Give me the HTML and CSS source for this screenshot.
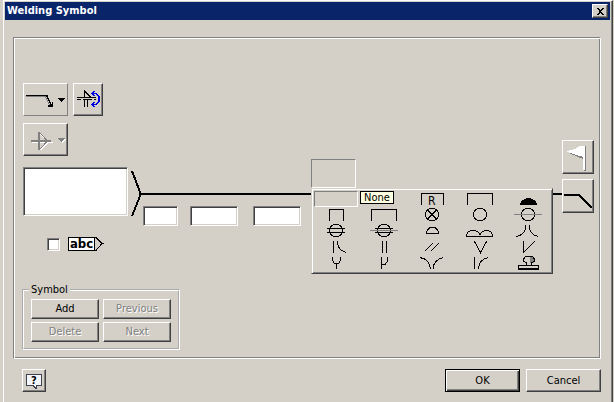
FILE: index.html
```html
<!DOCTYPE html>
<html lang="en">
<head>
<meta charset="utf-8">
<title>Welding Symbol</title>
<link rel="stylesheet" href="styles.css">
</head>
<body>
<div class="dialog" role="dialog" aria-labelledby="title">
  <header class="titlebar">
    <h1 id="title">Welding Symbol</h1>
    <button class="btn close" aria-label="Close"><svg width="8" height="7" viewBox="0 0 8 7"><path d="M0 0h2l2 2 2-2h2L5 3v1l3 3H6L4 5 2 7H0l3-3V3z"/></svg></button>
  </header>

  <main class="panel">
    <div class="workspace">
      <div class="tools">
        <button class="btn wide flat" aria-label="Arrow side"><svg width="43" height="31" viewBox="0 0 43 31"><path class="shade" d="M2 12.500h19l5 9"/><path class="line" d="M2 11.500h21l4 9M22.500 11.500l4 8"/><path d="M29 18v5h-5v-2h2v-1h2v-2z"/><path d="M34 14h7v1h-1v1h-1v1h-1v1h-1v-1h-1v-1h-1v-1h-1z"/></svg></button>
        <button class="btn square" aria-label="Swap symbols"><svg width="26" height="29" viewBox="0 0 26 29"><path class="line" d="M2 12.500h19M2 14.500h4M8 14.500h9M19 14.500h2M9.500 12V6l6 6M9.500 15v7M12.500 15v7"/><path class="blue" d="M16 8.500h5l3 3v5l-3 3h-5M19.500 6l-3 2.500 3 2.500M18.500 7v3M19.500 17l-3 2.500 3 2.500M18.500 18v3M23.500 11v6"/></svg></button>
      </div>
      <div class="tools">
        <button class="btn wide" disabled aria-label="Weld type"><svg width="41" height="29" viewBox="0 0 41 29"><path class="light" d="M7 17.500h21M15.500 9l8 8-8 8"/><path class="shade two" d="M6 16h20M14 7v18"/><path class="shade" d="M14.500 7.500l8 8.500-8 8.500"/><path fill="#fff" d="M34 14h7l-4 4z"/><path fill="#808080" d="M33 13h7v1h-1v1h-1v1h-1v1h-1v-1h-1v-1h-1v-1h-1z"/></svg></button>
      </div>

      <div class="diagram">
        <textarea class="sunken note" aria-label="Tail note"></textarea>
        <svg class="fork" width="10" height="49" viewBox="0 0 10 49"><path class="heavy" d="M1 4l8 21v4L1 49"/></svg>
        <div class="reference">
          <div class="rule"></div>
          <div class="values">
            <input class="sunken short" type="text" aria-label="Prefix">
            <input class="sunken long" type="text" aria-label="Size">
            <input class="sunken long" type="text" aria-label="Length">
          </div>
          <div class="picker">
            <div class="slot"></div>
            <div class="palette">
              <button class="cell selected" aria-label="None"></button>
              <span class="blank"></span>
              <button class="cell" aria-label="Backing removed"><svg viewBox="0 0 48 16"><path d="M13.500 14V2.500h22V14"/><text x="20" y="14">R</text></svg></button>
              <button class="cell" aria-label="Backing"><svg viewBox="0 0 48 16"><path d="M11.500 14V2.500h25V14"/></svg></button>
              <button class="cell" aria-label="Back weld"><svg viewBox="0 0 48 16"><path class="solid" d="M16 14v-2h1v-2h1V9h2V8h2V7h5v1h2v1h2v1h1v2h1v2z"/></svg></button>

              <button class="cell" aria-label="Plug"><svg viewBox="0 0 48 16"><path d="M17.500 14V2.500h14V14"/></svg></button>
              <button class="cell" aria-label="Slot"><svg viewBox="0 0 48 16"><path d="M11.500 14V2.500h25V14"/></svg></button>
              <button class="cell" aria-label="Stud"><svg viewBox="0 0 48 16"><circle cx="24" cy="7.500" r="6.500"/><path d="M20 3.500l8 8M28 3.500l-8 8"/></svg></button>
              <button class="cell" aria-label="Spot"><svg viewBox="0 0 48 16"><circle cx="24" cy="7.500" r="6.500"/></svg></button>
              <button class="cell" aria-label="Spot centered"><svg viewBox="0 0 48 16"><circle cx="24" cy="7.500" r="6.500"/><path class="grey" d="M10 7.500h28"/></svg></button>

              <button class="cell" aria-label="Seam"><svg viewBox="0 0 48 16"><circle cx="24" cy="7.500" r="6.500"/><path d="M15 5.500h18M15 9.500h18"/></svg></button>
              <button class="cell" aria-label="Seam centered"><svg viewBox="0 0 48 16"><circle cx="24" cy="7.500" r="6.500"/><path class="grey" d="M10 7.500h28"/><path d="M15 5.500h18M15 9.500h18"/></svg></button>
              <button class="cell" aria-label="Backing run"><svg viewBox="0 0 48 16"><path d="M18.500 10.500V9l1-2 2-2 3-.5 3 .5 2 2 1 2v1.500z"/></svg></button>
              <button class="cell" aria-label="Surfacing"><svg viewBox="0 0 48 16"><path d="M10.500 13.500v-2l2-3 3-1h3l3 1 2.500 3 2.500-3 3-1h2l3 1 2 3v2z"/></svg></button>
              <button class="cell" aria-label="Flare V"><svg viewBox="0 0 48 16"><path d="M21.500 2v3q-1 7-9 8.500M25.500 2v3q1 7 9 8.500"/></svg></button>

              <button class="cell" aria-label="Flare bevel"><svg viewBox="0 0 48 16"><path d="M21.500 2v12M25.500 2v3q2 7 9 8.500"/></svg></button>
              <button class="cell" aria-label="Square"><svg viewBox="0 0 48 16"><path d="M22.500 2v12M26.500 2v12"/></svg></button>
              <button class="cell" aria-label="Scarf"><svg viewBox="0 0 48 16"><path d="M16.500 12.500l8-8M22.500 12.500l8-8"/></svg></button>
              <button class="cell" aria-label="V groove"><svg viewBox="0 0 48 16"><path d="M18.500 2.500l6 11 6-11"/></svg></button>
              <button class="cell" aria-label="Bevel"><svg viewBox="0 0 48 16"><path d="M19.500 2v11.500l11-11"/></svg></button>

              <button class="cell" aria-label="U groove"><svg viewBox="0 0 48 16"><path d="M20.500 2v3.500l2 3h4l2-3V2M24.500 8v6"/></svg></button>
              <button class="cell" aria-label="J groove"><svg viewBox="0 0 48 16"><path d="M21.500 2v12M27.500 2v4l-2 3-4 1"/></svg></button>
              <button class="cell" aria-label="Edge flange"><svg viewBox="0 0 48 16"><path d="M12 2.500q10 2 10.500 11.500M35.500 2.500q-10 2-10.500 11.500"/></svg></button>
              <button class="cell" aria-label="Corner flange"><svg viewBox="0 0 48 16"><path d="M18.500 2v12M32 2.500q-9 2-9.500 11.500"/></svg></button>
              <button class="cell" aria-label="Surface stamp"><svg viewBox="0 0 48 16"><path class="solid dim" d="M26 2h3l2 2v2l-2 2h-3z"/><path d="M14.500 10.500h20v3h-20zM14 14.500h21M22.500 10V8l-3-2V4l2-2.500h7L30.500 4v2l-3 2v2"/></svg></button>
              <span class="tip" role="tooltip">None</span>
            </div>
          </div>
        </div>
      </div>

      <label class="tail">
        <input type="checkbox" class="sunken check">
        <span class="abc">abc</span><svg class="point" width="9" height="14" viewBox="0 0 9 14"><path class="line" d="M0 .5h1l6 6-6 7H0M7 6.500h2"/></svg>
      </label>

      <fieldset class="group">
        <legend>Symbol</legend>
        <button class="btn">Add</button>
        <button class="btn" disabled>Previous</button>
        <button class="btn" disabled>Delete</button>
        <button class="btn" disabled>Next</button>
      </fieldset>
    </div>

    <div class="side">
      <button class="btn" aria-label="Field flag"><svg width="28" height="30" viewBox="0 0 28 30"><path fill="#808080" d="M5 10l14 5v2L5 11zM21 4h1v25h-2v-1h1z"/><path fill="#fff" d="M3 9l8-2 5-3h5v24h-2V15l-3-1-13-4z"/></svg></button>
      <button class="btn" aria-label="All around"><svg width="28" height="30" viewBox="0 0 28 30"><path class="heavy" d="M0 14h15l13 13"/></svg></button>
    </div>
  </main>

  <footer class="actions">
    <button class="btn help" aria-label="Help"><svg width="16" height="16" viewBox="0 0 16 16"><path fill="#f4f6f9" stroke="#3c4450" d="M.5 1.500h15v11H10v3l-3-3H.5z"/><text class="query" x="5" y="11">?</text></svg></button>
    <button class="btn ok">OK</button>
    <button class="btn cancel">Cancel</button>
  </footer>
</div>
</body>
</html>
```
FILE: styles.css
```css
* { box-sizing: border-box; }

body {
  margin: 0;
  background: #d4d0c8;
  color: #000;
  font: 11px/14px "DejaVu Sans Condensed", "DejaVu Sans", sans-serif;
}

button, input, textarea { font: inherit; color: inherit; margin: 0; }

svg { display: block; shape-rendering: crispEdges; }

.dialog {
  margin: 0 1px 0 3px;
  min-height: 100vh;
  padding: 1px 2px 0 1px;
  border: solid;
  border-width: 1px 1px 0 1px;
  border-color: #fff #404040 #fff #fff;
  box-shadow: inset -1px 0 #808080;
}

.titlebar {
  display: flex;
  align-items: center;
  justify-content: space-between;
  height: 18px;
  padding: 0 2px;
  background: #0a246a;
  color: #fff;
}

.titlebar h1 { margin: 0; font-size: 11px; font-weight: bold; }

.btn {
  display: flex;
  align-items: center;
  justify-content: center;
  padding: 0;
  background: #d4d0c8;
  border: 1px solid;
  border-color: #fff #404040 #404040 #fff;
  box-shadow: inset -1px -1px #808080;
}

.btn:disabled { color: #808080; text-shadow: 1px 1px #fff; }

.close { width: 16px; height: 14px; color: #000; }

.panel {
  display: flex;
  margin: 17px 9px 0 8px;
  padding: 45px 6px 8px 8px;
  border: 1px solid;
  border-color: #808080 #fff #fff #808080;
  box-shadow: inset 1px 1px #fff, inset -1px -1px #808080;
}

.workspace { flex: 1; padding-left: 1px; }

.tools { display: flex; gap: 5px; margin-bottom: 7px; }
.tools + .tools { margin-bottom: 11px; }
.tools .btn { height: 33px; }
.wide { width: 45px; }
.square { width: 30px; }
.flat { border-color: #fff #808080 #808080 #fff; box-shadow: none; }

.line, .shade, .blue, .light, .heavy { fill: none; stroke: #000; }
.shade { stroke: #808080; }
.light { stroke: #fff; }
.blue { stroke: #0000e0; }
.heavy, .two { stroke-width: 2px; }

.diagram { display: flex; }

.sunken {
  appearance: none;
  padding: 0;
  background: #fff;
  border: 1px solid;
  border-color: #808080 #fff #fff #808080;
  border-radius: 0;
  box-shadow: inset 1px 1px #404040, inset -1px -1px #d4d0c8;
}

.note { width: 105px; height: 49px; resize: none; }
.fork { margin-left: 3px; }

.reference { position: relative; flex: 1; padding-top: 26px; }
.rule { height: 2px; background: #000; }
.values { display: flex; padding: 11px 0 0 2px; }
.values input { height: 20px; }
.short { width: 35px; margin-right: 12px; }
.long { width: 48px; margin-right: 15px; }

.picker { position: absolute; left: 170px; top: -8px; width: 242px; }

.slot {
  width: 45px;
  height: 29px;
  background: #d4d0c8;
  border: 1px solid;
  border-color: #808080 #fff #fff #808080;
}

.palette {
  position: relative;
  display: grid;
  grid-template-columns: repeat(5, 1fr);
  grid-auto-rows: 16px;
  padding: 2px 0;
  background: #d4d0c8;
  border: 1px solid;
  border-color: #d4d0c8 #404040 #404040 #d4d0c8;
  box-shadow: inset 1px 1px #fff, inset -1px -1px #808080;
}

.cell { padding: 0; border: 0; background: none; }
.cell svg { width: 48px; height: 16px; fill: none; stroke: #000; }
.cell .solid { fill: #000; stroke: none; }
.cell .dim { fill: #808080; }
.cell .grey { stroke: #808080; }
.cell text { fill: #000; stroke: none; font-size: 12px; }

.selected {
  margin: 0 2px;
  border: 1px solid;
  border-color: #808080 #fff #fff #808080;
}

.tip {
  position: absolute;
  left: 48px;
  top: 2px;
  padding: 0 3px;
  line-height: 11px;
  background: #ffffe1;
  border: 1px solid #000;
}

.tail { display: flex; align-items: center; width: 90px; margin: 11px 0 0 24px; }
.check { width: 13px; height: 13px; margin-right: 8px; }

.abc {
  width: 27px;
  height: 14px;
  background: #fff;
  border: 1px solid #000;
  font: bold 13px/11px "DejaVu Sans Condensed", "DejaVu Sans", sans-serif;
  text-align: center;
}

.group {
  display: grid;
  grid-template-columns: 68px 68px;
  grid-auto-rows: 20px;
  gap: 3px 4px;
  width: 158px;
  margin: 32px 0 0 -1px;
  padding: 2px 7px 6px;
  border: 1px solid;
  border-color: #808080 #fff #fff #808080;
  box-shadow: inset 1px 1px #fff, inset -1px -1px #808080;
}

.group {
  border: 2px groove #fff;
  box-shadow: none;
}

.group legend { padding: 0 2px; margin-left: -2px; }

.side { display: grid; gap: 5px; align-content: start; padding-top: 57px; }
.side .btn { width: 32px; height: 34px; }

.actions { display: flex; gap: 6px; margin: 10px 9px 0 17px; }
.actions .btn { width: 75px; height: 23px; }
.actions .help { width: 24px; margin-right: auto; }
.actions .ok { border-color: #000; box-shadow: inset 1px 1px #fff, inset -1px -1px #404040, inset -2px -2px #808080; }
.query { font-size: 11px; font-weight: bold; }
```
